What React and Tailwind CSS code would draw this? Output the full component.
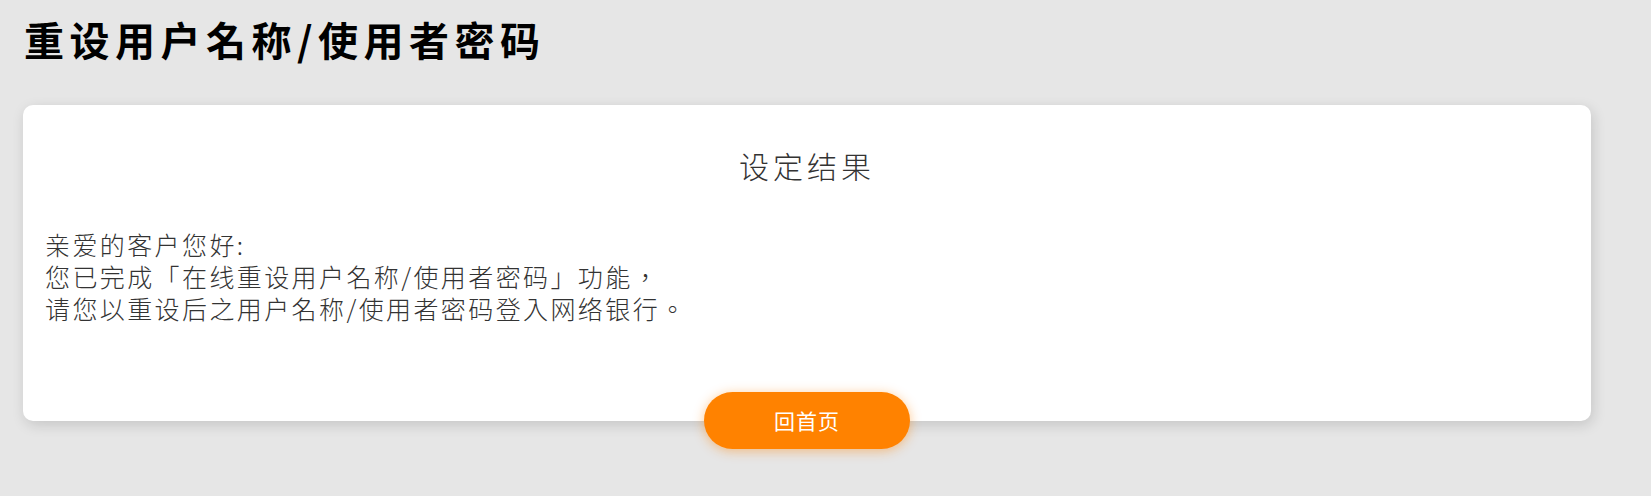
import React from 'react';

const cjk = { fontFamily: '"Noto Sans CJK TC", "Noto Sans CJK SC", "Noto Sans", sans-serif' };

function ResultCard() {
  return (
    <div className="ml-[23px] mr-[60px] mt-[42px] flex flex-col rounded-[10px] bg-white px-[22px] pt-[40px] shadow-[2px_4px_14px_rgba(0,0,0,0.14)]">
      <h2 className="text-center text-[30px] font-light leading-[40px] tracking-[4px] text-[#333]">
        设定结果
      </h2>
      <div lang="zh-TW" className="mt-[43px] text-[25px] font-light leading-[32px] tracking-[2.4px] text-[#333] [text-spacing-trim:space-all]">
        <p>亲爱的客户您好:</p>
        <p>您已完成「在线重设用户名称/使用者密码」功能，</p>
        <p>请您以重设后之用户名称/使用者密码登入网络银行。</p>
      </div>
      <div className="mt-[68px] -mb-[28px] flex justify-center">
        <button className="h-[57px] w-[206px] rounded-full bg-[#ff8200] text-[21px] tracking-[1px] text-white shadow-[0_2px_12px_rgba(255,130,0,0.45)]">
          回首页
        </button>
      </div>
    </div>
  );
}

export default function App() {
  return (
    <div className="min-h-[496px] bg-[#e6e6e6] pt-[15px] [text-spacing-trim:space-all]" style={cjk}>
      <h1 className="pl-[24px] text-[40px] font-bold leading-[48px] tracking-[5.5px] text-black">
        重设用户名称/使用者密码
      </h1>
      <ResultCard />
    </div>
  );
}
